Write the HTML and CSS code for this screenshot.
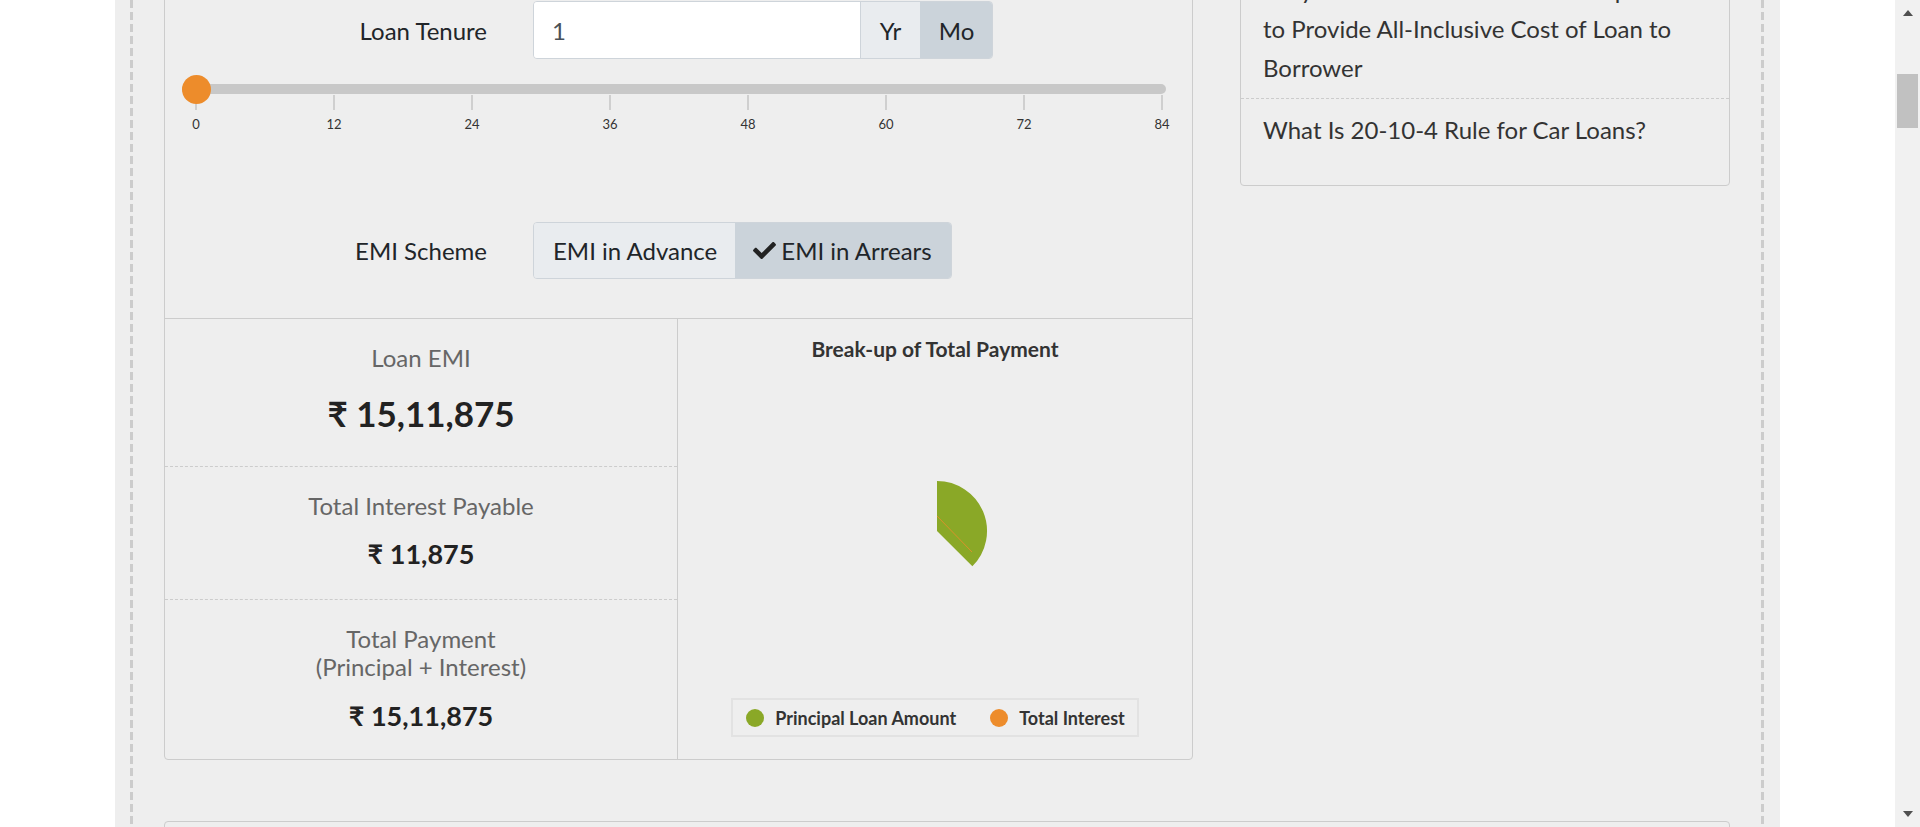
FILE: index.html
```html
<!DOCTYPE html>
<html lang="en">
<head>
<meta charset="utf-8">
<title>EMI Calculator</title>
<link rel="stylesheet" href="styles.css">
</head>
<body>
<div class="viewport">
  <div class="page-area">
    <div class="page">
      <div class="dashed">
        <div class="main-row">
          <div class="calc-card">
            <div class="form-area">
              <div class="form-row">
                <label class="form-label">Loan Tenure</label>
                <div class="input-group">
                  <div class="text-input">1</div>
                  <div class="addon addon-yr">Yr</div>
                  <div class="addon addon-mo active">Mo</div>
                </div>
              </div>
              <div class="slider">
                <div class="track"><span class="thumb"></span></div>
                <div class="ticks">
                  <div class="tick"><span class="tick-mark"></span><span class="tick-label">0</span></div>
                  <div class="tick"><span class="tick-mark"></span><span class="tick-label">12</span></div>
                  <div class="tick"><span class="tick-mark"></span><span class="tick-label">24</span></div>
                  <div class="tick"><span class="tick-mark"></span><span class="tick-label">36</span></div>
                  <div class="tick"><span class="tick-mark"></span><span class="tick-label">48</span></div>
                  <div class="tick"><span class="tick-mark"></span><span class="tick-label">60</span></div>
                  <div class="tick"><span class="tick-mark"></span><span class="tick-label">72</span></div>
                  <div class="tick"><span class="tick-mark"></span><span class="tick-label">84</span></div>
                </div>
              </div>
              <div class="form-row scheme-row">
                <label class="form-label">EMI Scheme</label>
                <div class="btn-group">
                  <div class="btn">EMI in Advance</div>
                  <div class="btn active"><svg class="check" viewBox="0 0 512 512" width="23" height="23"><path d="M173.9 439.4l-166.4-166.4c-10-10-10-26.2 0-36.2l36.2-36.2c10-10 26.2-10 36.2 0L192 312.7 432.1 72.6c10-10 26.2-10 36.2 0l36.2 36.2c10 10 10 26.2 0 36.2l-294.4 294.4c-10 10-26.2 10-36.2 0z" fill="#222"/></svg>EMI in Arrears</div>
                </div>
              </div>
            </div>
            <div class="results">
              <div class="results-left">
                <div class="result-block">
                  <div class="result-label">Loan EMI</div>
                  <div class="result-value big">₹ 15,11,875</div>
                </div>
                <div class="result-block">
                  <div class="result-label">Total Interest Payable</div>
                  <div class="result-value">₹ 11,875</div>
                </div>
                <div class="result-block last">
                  <div class="result-label">Total Payment<br>(Principal + Interest)</div>
                  <div class="result-value">₹ 15,11,875</div>
                </div>
              </div>
              <div class="results-right">
                <div class="chart-title">Break-up of Total Payment</div>
                <svg class="pie" width="514" height="330" viewBox="0 0 514 330">
                  <path d="M259 170 L259 120 A50 50 0 0 1 294.36 205.36 Z" fill="#8aa827"/>
                  <line x1="259" y1="155" x2="294" y2="191" stroke="#ed8c2b" stroke-width="0.8"/>
                </svg>
                <div class="legend">
                  <span class="legend-item"><span class="dot green"></span>Principal Loan Amount</span>
                  <span class="legend-item"><span class="dot orange"></span>Total Interest</span>
                </div>
              </div>
            </div>
          </div>
          <aside class="side-card">
            <ul class="side-list">
              <li>Why Lenders Must Use APR Comparison<br>to Provide All-Inclusive Cost of Loan to<br>Borrower</li>
              <li>What Is 20-10-4 Rule for Car Loans?</li>
            </ul>
          </aside>
        </div>
        <div class="bottom-card"></div>
      </div>
    </div>
  </div>
  <div class="scrollbar">
    <span class="arrow-up"></span>
    <span class="scroll-thumb"></span>
    <span class="scroll-spacer"></span>
    <span class="arrow-down"></span>
  </div>
</div>
</body>
</html>
```
FILE: styles.css
```css
html, body {
  margin: 0;
  height: 100%;
  overflow: hidden;
}
body {
  font-family: Lato, "Liberation Sans", "DejaVu Sans", sans-serif;
  color: #212529;
  background: #fff;
}
.viewport {
  display: flex;
  height: 827px;
}
.page-area {
  flex: 1;
  min-width: 0;
  overflow: hidden;
}
.page {
  width: 1665px;
  height: 100%;
  margin: 0 auto;
  background: #eeeeee;
  padding: 0 16px 0 15px;
  box-sizing: border-box;
  display: flow-root;
}
.dashed {
  display: flow-root;
  height: 100%;
  box-sizing: border-box;
  padding: 0 34px;
  background:
    linear-gradient(#cccccc 8px, transparent 8px) left top / 3px 12px repeat-y,
    linear-gradient(#cccccc 8px, transparent 8px) right top / 3px 12px repeat-y;
}
.main-row {
  display: flex;
  gap: 47px;
  align-items: flex-start;
  margin-top: -60px;
}
.calc-card {
  flex: none;
  width: 1029px;
  box-sizing: border-box;
  border: 1px solid #cccccc;
  border-radius: 4px;
}
.form-area {
  padding: 60px 26px 39px 17px;
}
.form-row {
  display: flex;
  align-items: center;
  height: 58px;
}
.form-label {
  width: 305px;
  margin-right: 46px;
  text-align: right;
  font-size: 24px;
  color: #212529;
}
.input-group {
  display: flex;
  width: 460px;
  height: 58px;
  box-sizing: border-box;
  border: 1px solid #ced4da;
  border-radius: 4px;
  overflow: hidden;
}
.text-input {
  flex: 1;
  background: #fff;
  display: flex;
  align-items: center;
  padding: 0 18px;
  font-size: 24px;
  color: #495057;
}
.addon {
  display: flex;
  align-items: center;
  justify-content: center;
  font-size: 24px;
  color: #212529;
  background: #e9ecef;
  border-left: 1px solid #ced4da;
}
.addon-yr { width: 59px; }
.addon-mo { width: 71px; }
.addon.active { background: #cbd3da; border-left-color: #cbd3da; }

.slider {
  margin-top: 25px;
}
.track {
  position: relative;
  height: 10px;
  border-radius: 5px;
  background: #c8c8c8;
}
.thumb {
  position: absolute;
  left: 0;
  top: -9px;
  width: 29px;
  height: 29px;
  border-radius: 50%;
  background: #ed8c2b;
}
.ticks {
  display: flex;
  justify-content: space-between;
  margin-top: 1px;
  padding: 0 4px 0 14px;
}
.tick {
  width: 0;
  display: flex;
  flex-direction: column;
  align-items: center;
}
.tick-mark {
  width: 2px;
  height: 15px;
  background: #cfcfcf;
}
.tick-label {
  margin-top: 6px;
  font-size: 13px;
  line-height: 16px;
  color: #333;
  white-space: nowrap;
}
.scheme-row {
  margin-top: 90px;
  height: 57px;
}
.btn-group {
  display: flex;
  height: 57px;
  box-sizing: border-box;
  border: 1px solid #ced4da;
  border-radius: 4px;
  overflow: hidden;
}
.btn {
  display: flex;
  align-items: center;
  padding: 0 18px 0 19px;
  font-size: 24px;
  color: #212529;
  background: #e9ecef;
}
.btn.active {
  background: #cbd3da;
  padding: 0 19px 0 18px;
}
.check {
  margin-right: 5px;
}

.results {
  display: grid;
  grid-template-columns: 513px 1fr;
  border-top: 1px solid #cccccc;
}
.results-left {
  border-right: 1px solid #cccccc;
}
.result-block {
  padding: 25px 0 26px;
  text-align: center;
  border-bottom: 1px dashed #cccccc;
}
.result-block.last {
  border-bottom: none;
  padding-bottom: 24px;
}
.result-label {
  font-size: 24px;
  line-height: 28px;
  color: #666;
}
.result-value {
  margin-top: 14px;
  font-size: 27px;
  line-height: 39px;
  font-weight: 700;
  color: #222;
}
.result-value.big {
  font-size: 35px;
  line-height: 54px;
}
.result-block.last .result-value {
  margin-top: 15px;
}
.results-right {
  display: flex;
  flex-direction: column;
  align-items: center;
}
.chart-title {
  margin-top: 18px;
  font-size: 21px;
  line-height: 24px;
  font-weight: 700;
  color: #333;
}
.pie {
  display: block;
}
.legend {
  margin-top: 7px;
  display: flex;
  align-items: center;
  gap: 34px;
  height: 39px;
  box-sizing: border-box;
  padding: 0 12px 0 13px;
  border: 2px solid #e2e2e2;
}
.legend-item {
  display: flex;
  align-items: center;
  font-size: 18px;
  font-weight: 700;
  color: #333;
}
.dot {
  width: 18px;
  height: 18px;
  border-radius: 50%;
  margin-right: 11px;
}
.dot.green { background: #8aa827; }
.dot.orange { background: #ed8c2b; }

.side-card {
  flex: 1;
  border: 1px solid #cccccc;
  border-radius: 4px;
}
.side-list {
  list-style: none;
  margin: 0;
  padding: 18px 0 25px;
}
.side-list li {
  padding: 11px 22px;
  font-size: 24px;
  line-height: 39px;
  color: #333;
  border-bottom: 1px dashed #cccccc;
}
.side-list li:last-child {
  border-bottom: none;
}
.bottom-card {
  margin-top: 61px;
  height: 120px;
  border: 1px solid #cccccc;
  border-radius: 4px;
}

.scrollbar {
  flex: none;
  width: 25px;
  height: 827px;
  background: #f1f1f1;
  display: flex;
  flex-direction: column;
  align-items: center;
}
.arrow-up {
  margin-top: 10px;
  width: 0;
  height: 0;
  border-left: 5.5px solid transparent;
  border-right: 5.5px solid transparent;
  border-bottom: 6px solid #505050;
}
.scroll-thumb {
  margin-top: 58px;
  width: 21px;
  height: 54px;
  background: #c1c1c1;
}
.scroll-spacer {
  flex: 1;
}
.arrow-down {
  margin-bottom: 10px;
  width: 0;
  height: 0;
  border-left: 5.5px solid transparent;
  border-right: 5.5px solid transparent;
  border-top: 6px solid #505050;
}
```
